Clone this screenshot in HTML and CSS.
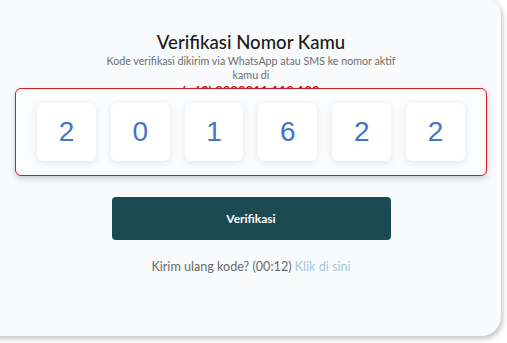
FILE: index.html
```html
<!DOCTYPE html>
<html lang="id">
<head>
<meta charset="utf-8">
<title>Verifikasi Nomor Kamu</title>
<link rel="stylesheet" href="styles.css">
</head>
<body>
<div class="card">
  <h1 class="title">Verifikasi Nomor Kamu</h1>
  <p class="subtitle">Kode verifikasi dikirim via WhatsApp atau SMS ke nomor aktif kamu di</p>
  <p class="phone">(+62) 8888811 118 188</p>
  <div class="otp">
    <div class="digit">2</div>
    <div class="digit">0</div>
    <div class="digit">1</div>
    <div class="digit">6</div>
    <div class="digit">2</div>
    <div class="digit">2</div>
  </div>
  <button class="btn" type="button">Verifikasi</button>
  <p class="resend">Kirim ulang kode? (00:12) <a class="link" href="#">Klik di sini</a></p>
</div>
</body>
</html>
```
FILE: styles.css
```css
html, body {
  margin: 0;
  padding: 0;
  background: #ffffff;
  overflow: hidden;
}
body {
  width: 507px;
  height: 343px;
  font-family: Lato, "Noto Sans", sans-serif;
}
.card {
  box-sizing: border-box;
  margin: -4px 0 0 -20px;
  width: 521px;
  height: 340px;
  border-radius: 20px;
  background: #f8fafc;
  box-shadow: 2px 3px 5px rgba(0, 0, 0, 0.22);
  padding: 34px 14px 0 35px;
  display: flex;
  flex-direction: column;
  align-items: center;
}
.title {
  margin: 0;
  font-size: 18.6px;
  line-height: 24px;
  font-weight: 500;
  color: #1a1a1a;
}
.subtitle {
  margin: 0;
  width: 292px;
  text-align: center;
  font-size: 10.7px;
  line-height: 14px;
  color: #6e6e6e;
}
.phone {
  margin: 1px 0 0;
  font-size: 13px;
  line-height: 16px;
  font-weight: 700;
  color: #c0121b;
}
.otp {
  position: relative;
  z-index: 1;
  box-sizing: border-box;
  margin-top: -11px;
  width: 472px;
  height: 88px;
  border: 1px solid #cf1a22;
  border-radius: 6px;
  background: #fbfcfd;
  box-shadow: 0 3px 6px rgba(0, 0, 0, 0.18);
  padding: 14px 21px 0;
  display: flex;
  gap: 15px;
}
.digit {
  width: 59px;
  height: 58px;
  border-radius: 6px;
  background: #ffffff;
  box-shadow: 0 2px 8px rgba(0, 0, 0, 0.09);
  display: flex;
  align-items: center;
  justify-content: center;
  font-family: "Liberation Sans", Arial, sans-serif;
  font-size: 28px;
  color: #4276c2;
}
.btn {
  margin-top: 21px;
  width: 279px;
  height: 43px;
  border: none;
  border-radius: 4px;
  background: #1c4a52;
  color: #ffffff;
  font-family: Lato, "Noto Sans", sans-serif;
  font-size: 12px;
  font-weight: 700;
}
.resend {
  margin: 19px 0 0;
  font-size: 12.6px;
  line-height: 16px;
  color: #6b6b6b;
}
.link {
  color: #a8c6e6;
  text-decoration: none;
}
```
